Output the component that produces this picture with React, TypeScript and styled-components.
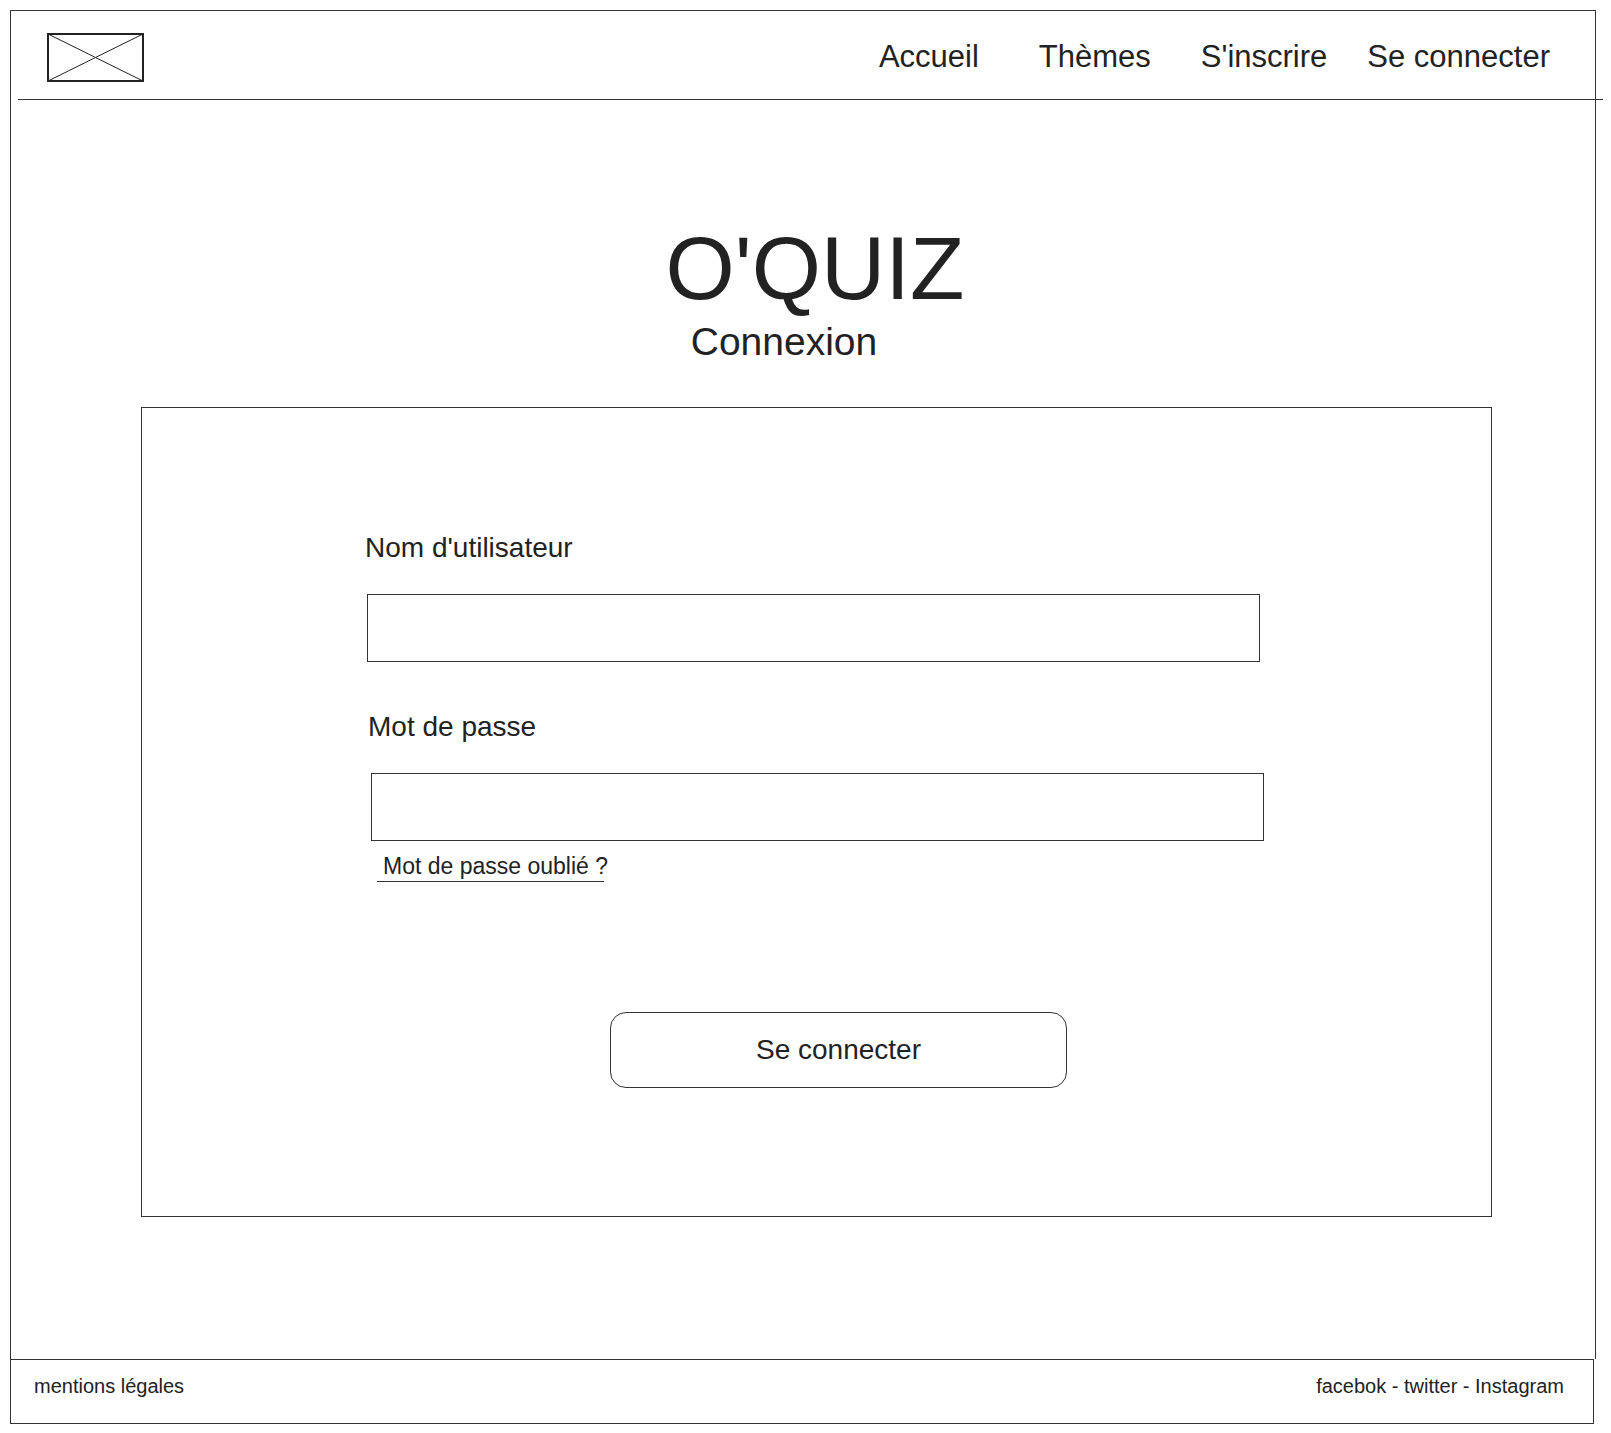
import React from 'react';
import styled, { createGlobalStyle } from 'styled-components';

const GlobalStyle = createGlobalStyle`
   body {
      margin: 0;
      background: #fff;
      font-family: 'Liberation Sans', Arial, sans-serif;
      color: #222;
   }
`;

const line = '#333';

const navItems = [
   { label: 'Accueil', gap: 0 },
   { label: 'Thèmes', gap: 60 },
   { label: "S'inscrire", gap: 50 },
   { label: 'Se connecter', gap: 40 },
];

const App = () => {
   return (
      <>
         <GlobalStyle />
         <Frame>
            <Header>
               <Logo>
                  <svg width="97" height="49" viewBox="0 0 97 49">
                     <rect x="1" y="1" width="95" height="47" fill="none" stroke="#222" strokeWidth="2" />
                     <line x1="1" y1="1" x2="96" y2="48" stroke="#222" strokeWidth="1" />
                     <line x1="96" y1="1" x2="1" y2="48" stroke="#222" strokeWidth="1" />
                  </svg>
               </Logo>
               <Nav>
                  {navItems.map(item => (
                     <NavLink key={item.label} $gap={item.gap}>
                        {item.label}
                     </NavLink>
                  ))}
               </Nav>
            </Header>
            <HeaderRule />

            <Title>O'QUIZ</Title>
            <Subtitle>Connexion</Subtitle>

            <FormBox>
               <Label $left={0}>Nom d'utilisateur</Label>
               <Input $left={2} type="text" />
               <Label $left={3} $top={51}>
                  Mot de passe
               </Label>
               <Input $left={6} type="password" />
               <Forgot>Mot de passe oublié ?</Forgot>
               <Submit>Se connecter</Submit>
            </FormBox>
         </Frame>
         <Footer>
            <span>mentions légales</span>
            <span>facebok - twitter - Instagram</span>
         </Footer>
      </>
   );
};

const Frame = styled.div`
   box-sizing: border-box;
   margin: 10px 0 0 10px;
   width: 1586px;
   height: 1349px;
   border: 1px solid ${line};
   border-bottom: none;
   display: flex;
   flex-direction: column;
`;

const Header = styled.div`
   display: flex;
   align-items: center;
   height: 88px;
   padding: 0 45px 0 36px;
`;

const Logo = styled.div`
   display: flex;
   margin-top: 5px;
   svg {
      display: block;
   }
`;

const Nav = styled.nav`
   margin-left: auto;
   display: flex;
   align-items: center;
   padding-top: 2px;
`;

const NavLink = styled.a<{ $gap: number }>`
   margin-left: ${p => p.$gap}px;
   font-size: 31px;
   line-height: 1;
   color: #222;
   cursor: pointer;
   white-space: nowrap;
`;

const HeaderRule = styled.div`
   height: 1px;
   background: ${line};
   margin: 0 -8px 0 7px;
`;

const Title = styled.h1`
   margin: 124px 0 0;
   padding-left: 24px;
   text-align: center;
   font-size: 89px;
   line-height: 1;
   font-weight: 400;
   color: #222;
`;

const Subtitle = styled.h2`
   margin: 9px 0 0;
   padding-right: 38px;
   text-align: center;
   font-size: 39px;
   line-height: 1;
   font-weight: 400;
   color: #222;
`;

const FormBox = styled.form`
   box-sizing: border-box;
   margin: 46px 0 0 130px;
   width: 1351px;
   height: 810px;
   border: 1px solid ${line};
   padding: 126px 0 0 223px;
   display: flex;
   flex-direction: column;
   align-items: flex-start;
`;

const Label = styled.label<{ $left: number; $top?: number }>`
   margin: ${p => p.$top ?? 0}px 0 0 ${p => p.$left}px;
   font-size: 28px;
   line-height: 1;
   color: #222;
`;

const Input = styled.input<{ $left: number }>`
   box-sizing: border-box;
   margin: 32px 0 0 ${p => p.$left}px;
   width: 893px;
   height: 68px;
   border: 1.5px solid ${line};
   border-radius: 0;
   background: #fff;
   outline: none;
   padding: 0 12px;
   font: 24px 'Liberation Sans', Arial, sans-serif;
`;

const Forgot = styled.a`
   box-sizing: border-box;
   margin: 14px 0 0 12px;
   padding: 0 0 3px 6px;
   width: 227px;
   font-size: 23px;
   line-height: 1;
   color: #222;
   white-space: nowrap;
   border-bottom: 1px solid ${line};
   cursor: pointer;
`;

const Submit = styled.button`
   box-sizing: border-box;
   margin: 130px 0 0 245px;
   width: 457px;
   height: 76px;
   border: 1px solid ${line};
   border-radius: 16px;
   background: #fff;
   font: 28px 'Liberation Sans', Arial, sans-serif;
   color: #222;
   cursor: pointer;
`;

const Footer = styled.footer`
   box-sizing: border-box;
   margin-left: 10px;
   width: 1584px;
   height: 65px;
   border: 1px solid ${line};
   display: flex;
   justify-content: space-between;
   align-items: flex-start;
   padding: 16px 29px 0 23px;
   font-size: 20px;
   line-height: 1;
   color: #222;
`;

export default App;
